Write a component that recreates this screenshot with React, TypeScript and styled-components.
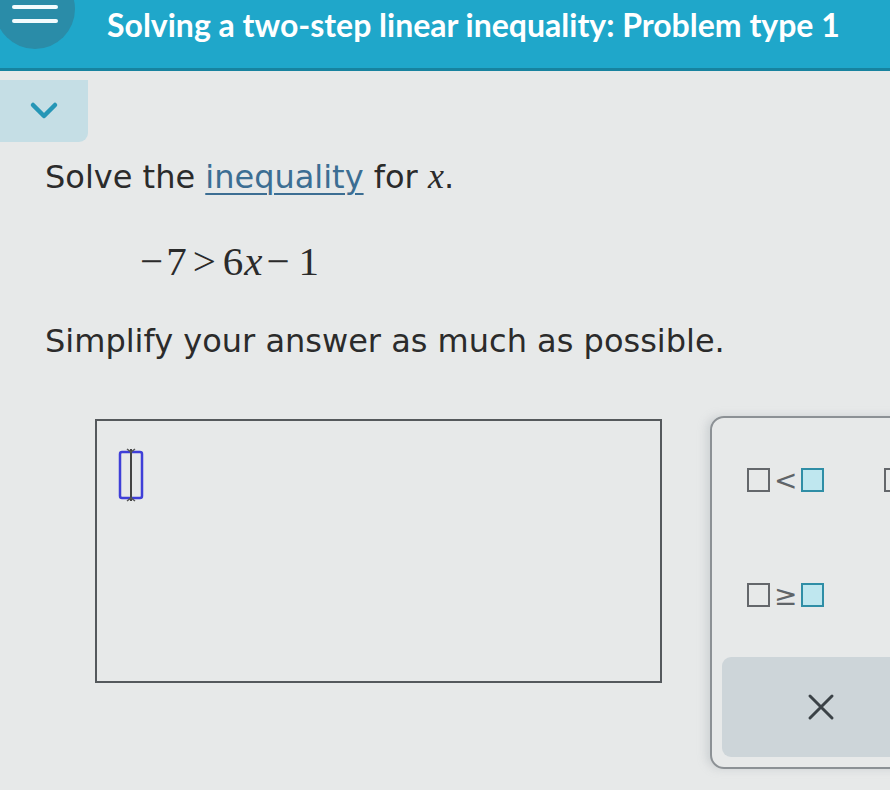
import React from "react";
import styled, { createGlobalStyle } from "styled-components";

const Global = createGlobalStyle`
  html, body { margin: 0; padding: 0; background: #e7e9e9; }
  #root { width: 890px; height: 790px; }
`;

const Page = styled.div`
  width: 890px;
  height: 790px;
  overflow: hidden;
  background: #e7e9e9;
  display: flex;
  flex-direction: column;
`;

const Header = styled.header`
  height: 68px;
  flex: none;
  background: #1fa7ca;
  border-bottom: 3px solid #17839f;
  display: flex;
  align-items: flex-start;
  overflow: hidden;
`;

const MenuButton = styled.div`
  width: 80px;
  height: 80px;
  margin: -31px 0 0 -5px;
  border-radius: 50%;
  background: #2a8ca8;
  flex: none;
  display: flex;
  flex-direction: column;
  justify-content: flex-end;
  align-items: center;
  gap: 10px;
  padding-bottom: 26px;
  box-sizing: border-box;
`;

const MenuLine = styled.span`
  display: block;
  width: 46px;
  height: 4px;
  border-radius: 2px;
  background: #f2fbfd;
`;

const Title = styled.h1`
  margin: 5px 0 0 32px;
  font-family: Lato, "Liberation Sans", sans-serif;
  font-weight: 700;
  font-size: 32px;
  line-height: 40px;
  color: #ffffff;
  white-space: nowrap;
`;

const Tab = styled.div`
  margin-top: 9px;
  width: 88px;
  height: 62px;
  flex: none;
  background: #c5dee5;
  border-bottom-right-radius: 9px;
  display: flex;
  align-items: center;
  justify-content: center;
`;

const Content = styled.main`
  padding-left: 45px;
  display: flex;
  flex-direction: column;
`;

const Prose = styled.p<{ $top: number }>`
  margin: ${(p) => p.$top}px 0 0 0;
  font-family: "DejaVu Sans", Verdana, sans-serif;
  font-size: 32px;
  line-height: 40px;
  color: #2b2b2b;
  white-space: nowrap;
`;

const Link = styled.span`
  color: #3c6e93;
  text-decoration: underline;
  text-underline-offset: 5px;
  text-decoration-thickness: 2px;
`;

const Var = styled.span`
  font-family: "Liberation Serif", "Times New Roman", serif;
  font-style: italic;
  font-size: 36px;
`;

const Equation = styled.div`
  margin: 41px 0 0 95px;
  font-family: "Liberation Serif", "Times New Roman", serif;
  font-size: 41px;
  line-height: 46px;
  color: #2b2b2b;
  white-space: nowrap;
  display: flex;
  align-items: baseline;
`;

const MathVar = styled.span`
  font-style: italic;
  margin-left: 1px;
`;

const Op = styled.span<{ $l: number; $r: number }>`
  margin-left: ${(p) => p.$l}px;
  margin-right: ${(p) => p.$r}px;
`;

const Work = styled.div`
  margin-top: 55px;
  display: flex;
  align-items: flex-start;
`;

const AnswerBox = styled.div`
  margin: 3px 0 0 95px;
  width: 567px;
  height: 264px;
  box-sizing: border-box;
  border: 2px solid #55595c;
  flex: none;
  padding: 25px 0 0 20px;
`;

const Keypad = styled.div`
  margin-left: 48px;
  width: 320px;
  height: 353px;
  flex: none;
  box-sizing: border-box;
  border: 2px solid #8c9195;
  border-radius: 14px;
  padding: 32px 0 10px 10px;
  display: flex;
  flex-direction: column;
  box-shadow: -4px 0 8px rgba(160, 170, 175, 0.35);
`;

const KeyGrid = styled.div`
  margin-left: 25px;
  display: grid;
  grid-template-columns: 137px 137px;
  grid-auto-rows: 60px;
  row-gap: 55px;
`;

const Key = styled.div`
  display: flex;
  align-items: center;
  gap: 4px;
  font-family: "DejaVu Sans", sans-serif;
  font-size: 28px;
  color: #5f6468;
`;

const Slot = styled.span<{ $filled?: boolean }>`
  display: inline-block;
  width: 19px;
  height: 20px;
  border: 2.5px solid ${(p) => (p.$filled ? "#2f8ea6" : "#64676b")};
  background: ${(p) => (p.$filled ? "#bfe7ef" : "transparent")};
`;

const ClearKey = styled.div`
  margin-top: 32px;
  width: 100%;
  height: 100px;
  background: #cdd5d9;
  border-radius: 9px 0 0 9px;
  display: flex;
  align-items: center;
  padding-left: 85px;
  box-sizing: border-box;
`;

const Chevron = () => (
  <svg width="30" height="20" viewBox="0 0 30 20">
    <path d="M4 4 L15 15 L26 4" fill="none" stroke="#2596b6" strokeWidth="4.5" strokeLinecap="round" strokeLinejoin="round" />
  </svg>
);

const Cursor = () => (
  <svg width="30" height="58" viewBox="0 0 30 58">
    <rect x="3" y="6" width="22" height="46" rx="2" fill="none" stroke="#3f3fd8" strokeWidth="2.5" />
    <line x1="14" y1="3" x2="14" y2="55" stroke="#444" strokeWidth="2" />
    <path d="M10 3 L14 6 L18 3 M10 55 L14 52 L18 55" fill="none" stroke="#555" strokeWidth="1.5" />
  </svg>
);

const Cross = () => (
  <svg width="28" height="28" viewBox="0 0 28 28">
    <path d="M3 3 L25 25 M25 3 L3 25" stroke="#3b4247" strokeWidth="3" strokeLinecap="round" />
  </svg>
);

export default function App() {
  return (
    <Page>
      <Global />
      <Header>
        <MenuButton>
          <MenuLine />
          <MenuLine />
        </MenuButton>
        <Title>Solving a two-step linear inequality: Problem type 1</Title>
      </Header>
      <Tab>
        <Chevron />
      </Tab>
      <Content>
        <Prose $top={14}>
          Solve the <Link>inequality</Link> for <Var>x</Var>.
        </Prose>
        <Equation>
          <Op $l={0} $r={3}>−</Op>7<Op $l={6} $r={7}>&gt;</Op>6<MathVar>x</MathVar>
          <Op $l={4} $r={9}>−</Op>1
        </Equation>
        <Prose $top={37}>Simplify your answer as much as possible.</Prose>
      </Content>
      <Work>
        <AnswerBox>
          <Cursor />
        </AnswerBox>
        <Keypad>
          <KeyGrid>
            <Key>
              <Slot />&lt;<Slot $filled />
            </Key>
            <Key>
              <Slot />≤<Slot $filled />
            </Key>
            <Key>
              <Slot />≥<Slot $filled />
            </Key>
            <Key />
          </KeyGrid>
          <ClearKey>
            <Cross />
          </ClearKey>
        </Keypad>
      </Work>
    </Page>
  );
}
